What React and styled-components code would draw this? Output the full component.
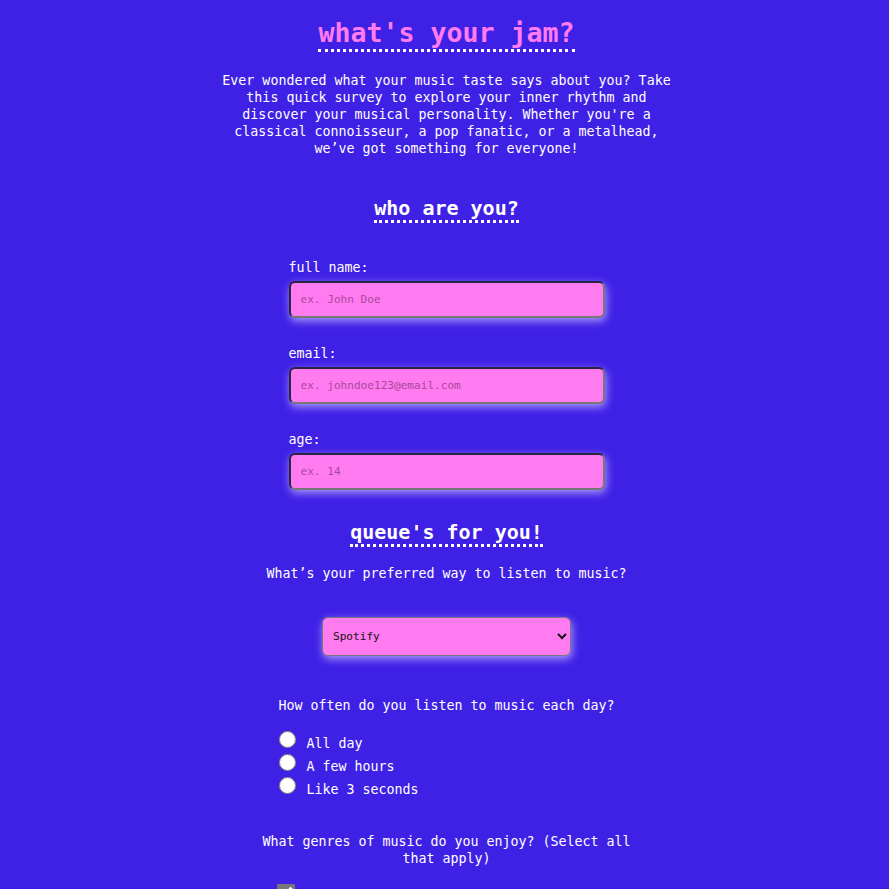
import styled, { createGlobalStyle } from "styled-components";

const GlobalStyle = createGlobalStyle`
  html, body {
    margin: 0;
    background: #3f21e6;
  }
  body {
    font-family: "DejaVu Sans Mono", "Liberation Mono", monospace;
    color: #ffffff;
  }
`;

const Page = styled.main`
  display: flex;
  flex-direction: column;
  align-items: center;
  text-align: center;
  padding: 17px 0 40px 4px;
  font-size: 13.3px;
  line-height: 17px;
`;

const Title = styled.h1`
  margin: 0;
  font-size: 26.6px;
  line-height: 32px;
  font-weight: bold;
  color: #ff7bef;
  border-bottom: 3px dotted #ffffff;
`;

const Intro = styled.p`
  margin: 20px 0 0;
  width: 460px;
`;

const SectionTitle = styled.h2`
  margin: ${(p) => p.$top}px 0 0;
  font-size: 20px;
  line-height: 24px;
  font-weight: bold;
  color: #ffffff;
  border-bottom: 3px dotted #ffffff;
`;

const Field = styled.div`
  display: flex;
  flex-direction: column;
  align-items: flex-start;
  gap: 5px;
  width: 316px;
  margin-top: ${(p) => p.$top}px;
`;

const Label = styled.label`
  display: block;
`;

const TextInput = styled.input`
  box-sizing: border-box;
  width: 316px;
  height: 37px;
  padding: 0 10px;
  background: #ff7bef;
  border: 2px solid;
  border-color: #2a2540 #777777 #777777 #2a2540;
  border-radius: 6px;
  box-shadow: 1px 3px 8px rgba(190, 175, 255, 0.85);
  font-family: "DejaVu Sans Mono", monospace;
  font-size: 11.1px;
  color: #222;
  outline: none;

  &::placeholder {
    color: #a8489c;
  }
`;

const Question = styled.p`
  margin: ${(p) => p.$top}px 0 0;
  width: 400px;
`;

const Select = styled.select`
  box-sizing: border-box;
  margin-top: 35px;
  width: 249px;
  height: 39px;
  padding: 0 6px;
  background: #ff7bef;
  border: 1px solid #777777;
  border-radius: 6px;
  box-shadow: 1px 3px 8px rgba(190, 175, 255, 0.85);
  font-family: "DejaVu Sans Mono", monospace;
  font-size: 11.1px;
  color: #111;
`;

const OptionList = styled.div`
  box-sizing: border-box;
  display: flex;
  flex-direction: column;
  align-items: flex-start;
  width: 340px;
  margin-top: 17px;
`;

const Option = styled.label`
  display: flex;
  align-items: flex-start;
  gap: 11px;
  height: 23px;
`;

const OptionText = styled.span`
  margin-top: 4px;
`;

const Radio = styled.input`
  width: 17px;
  height: 17px;
  margin: 0 0 0 2px;
`;

const Check = styled.input`
  width: 18px;
  height: 18px;
  margin: 0;
  accent-color: #777777;
`;

const CheckRow = styled.label`
  display: flex;
  align-items: flex-start;
  gap: 9px;
  width: 340px;
  margin-top: 17px;
`;

const CheckText = styled.span`
  margin-top: 5px;
`;

export default function App() {
  return (
    <>
      <GlobalStyle />
      <Page>
        <Title>what's your jam?</Title>
        <Intro>
          Ever wondered what your music taste says about you? Take this quick
          survey to explore your inner rhythm and discover your musical
          personality. Whether you're a classical connoisseur, a pop fanatic, or
          a metalhead, we’ve got something for everyone!
        </Intro>

        <SectionTitle $top={39}>who are you?</SectionTitle>

        <Field $top={36}>
          <Label htmlFor="name">full name:</Label>
          <TextInput id="name" placeholder="ex. John Doe" />
        </Field>
        <Field $top={27}>
          <Label htmlFor="email">email:</Label>
          <TextInput id="email" placeholder="ex. johndoe123@email.com" />
        </Field>
        <Field $top={27}>
          <Label htmlFor="age">age:</Label>
          <TextInput id="age" placeholder="ex. 14" />
        </Field>

        <SectionTitle $top={30}>queue's for you!</SectionTitle>

        <Question $top={18}>What’s your preferred way to listen to music?</Question>
        <Select defaultValue="spotify">
          <option value="spotify">Spotify</option>
          <option value="apple">Apple Music</option>
          <option value="youtube">YouTube</option>
          <option value="radio">Radio</option>
        </Select>

        <Question $top={41}>How often do you listen to music each day?</Question>
        <OptionList>
          <Option>
            <Radio type="radio" name="often" />
            <OptionText>All day</OptionText>
          </Option>
          <Option>
            <Radio type="radio" name="often" />
            <OptionText>A few hours</OptionText>
          </Option>
          <Option>
            <Radio type="radio" name="often" />
            <OptionText>Like 3 seconds</OptionText>
          </Option>
        </OptionList>

        <Question $top={33}>
          What genres of music do you enjoy? (Select all that apply)
        </Question>
        <CheckRow>
          <Check type="checkbox" defaultChecked />
          <CheckText>Pop</CheckText>
        </CheckRow>
      </Page>
    </>
  );
}
